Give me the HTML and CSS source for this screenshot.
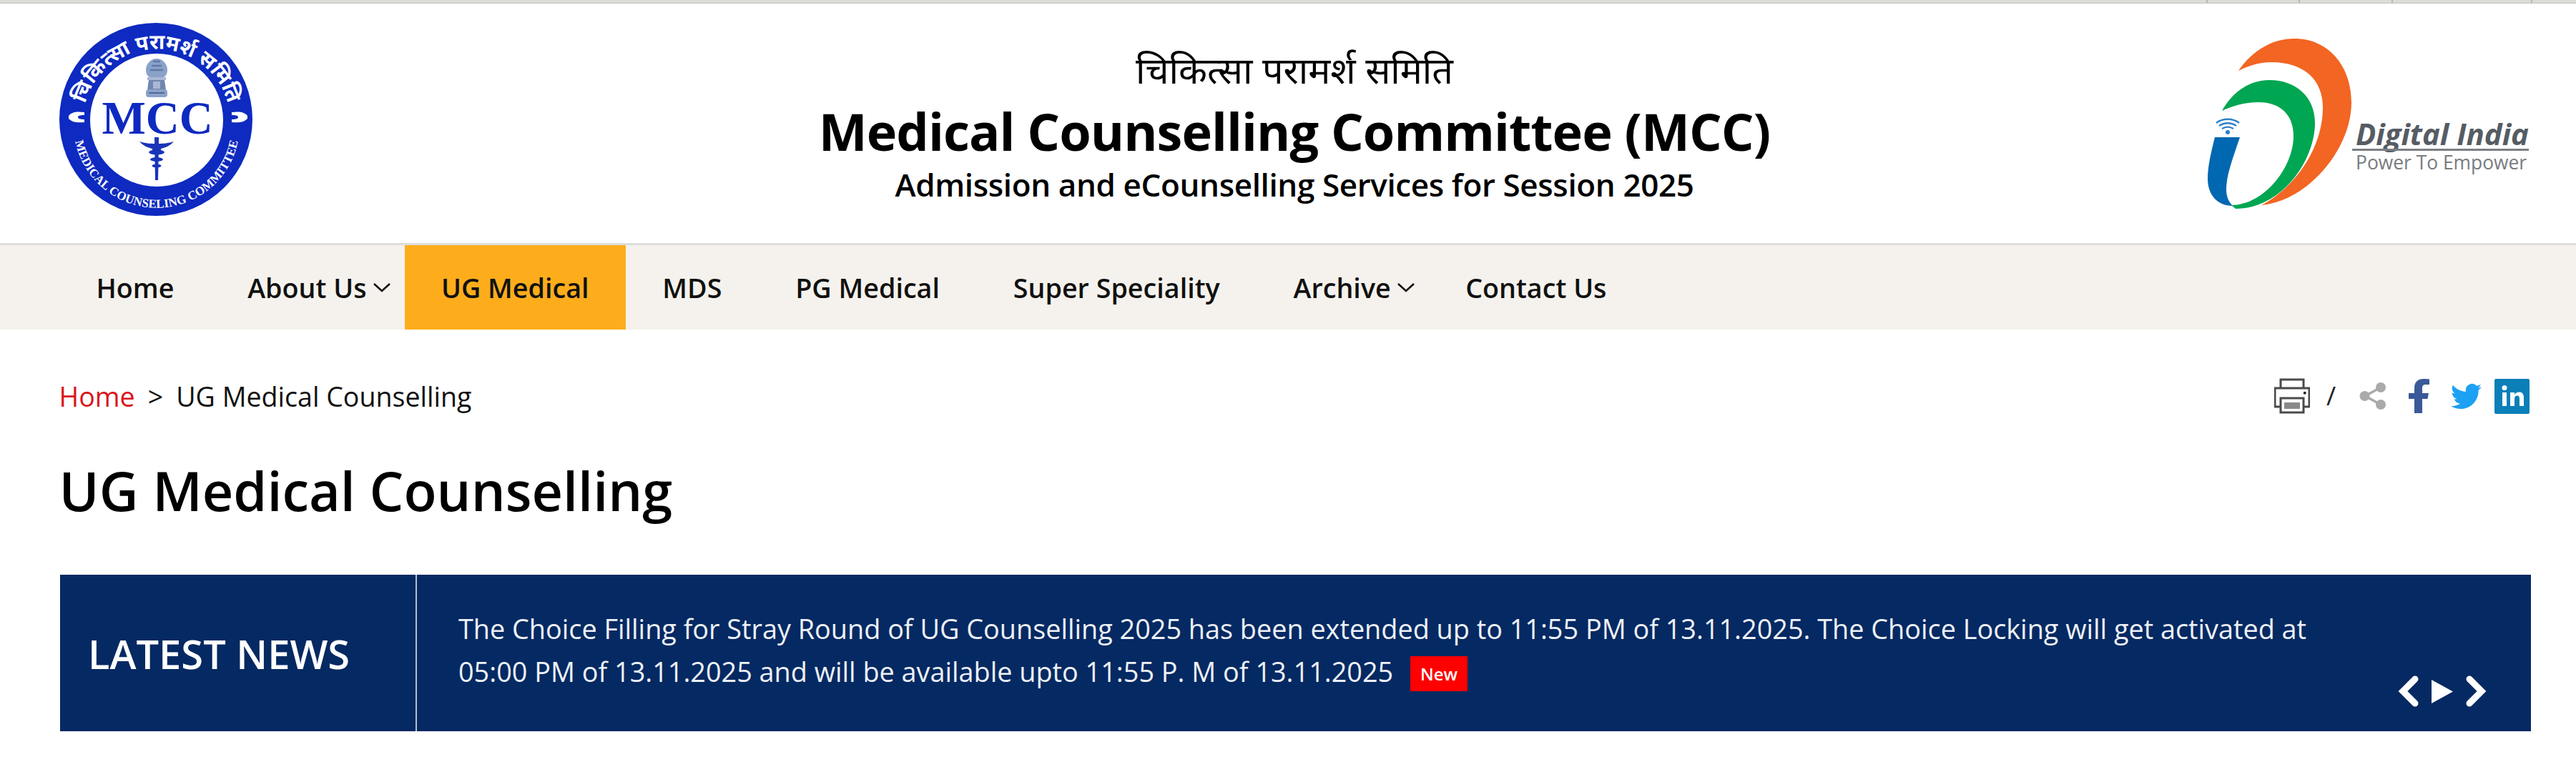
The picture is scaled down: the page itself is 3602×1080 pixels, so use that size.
FILE: index.html
```html
<!DOCTYPE html>
<html lang="en">
<head>
<meta charset="utf-8">
<title>UG Medical Counselling</title>
<link rel="stylesheet" href="styles.css">
</head>
<body>
<div class="topbar"><span class="cell c1"></span><span class="cell c2"></span><span class="cell c3"></span><span class="cell c4"></span><span class="cell c5"></span></div>
<header class="site-header">
  <svg class="logo-mcc" viewBox="80 5 300 335" width="300" height="335" aria-label="MCC logo">
    <defs>
      <path id="arcTop" d="M 120 200 A 103 103 0 1 1 318 200"/>
      <path id="arcBottom" d="M 104 190 A 116 116 0 0 0 334 190"/>
    </defs>
    <circle cx="218" cy="167" r="135" fill="#0e2ac0"/>
    <circle cx="219" cy="168" r="93" fill="#fff"/>
    <text class="seal-hi"><textPath href="#arcTop" startOffset="50%" text-anchor="middle">चिकित्सा परामर्श समिति</textPath></text>
    <text class="seal-en"><textPath href="#arcBottom" startOffset="50%" text-anchor="middle" textLength="318" lengthAdjust="spacing">MEDICAL COUNSELING COMMITTEE</textPath></text>
    <text class="seal-mcc" x="220" y="187" text-anchor="middle">MCC</text>
    <path d="M96 162c5-6 12-6 22-5v4c-7 0-9 1-9 3s3 3 9 3v4c-10 1-17 0-22-5z" fill="#fff"/>
    <path d="M346 162c-5-6-12-6-22-5v4c7 0 9 1 9 3s-3 3-9 3v4c10 1 17 0 22-5z" fill="#fff"/>
    <g class="seal-emblem">
      <path d="M204 98c0-9 7-16 15-16s15 7 15 16c0 5-2 8-5 10H209c-3-2-5-5-5-10z" fill="#8ba2c8"/>
      <path d="M212 92h14M210 98h18M214 86h10" stroke="#5f78a8" stroke-width="2.500"/>
      <rect x="206" y="108" width="26" height="4" fill="#a9b8d4"/>
      <path d="M208 112h22l2 14h-26z" fill="#6f86b0"/>
      <path d="M214 114h10v10h-10z" fill="#a9b8d4"/>
      <rect x="204" y="125" width="30" height="11" rx="4" fill="#8ba2c8"/>
      <path d="M208 130h22" stroke="#4f69a0" stroke-width="2"/>
    </g>
    <g class="seal-caduceus" fill="#1a34b8">
      <path d="M195 198c10 3 17 3 24 3s14 0 24-3c-5 6-13 9-18 10v3h-12v-3c-5-1-13-4-18-10z"/>
      <path d="M216 192h6v10l-1 50-2 0-2-0z"/>
      <ellipse cx="219" cy="213" rx="11" ry="3.500"/>
      <ellipse cx="219" cy="223" rx="9" ry="3"/>
      <ellipse cx="219" cy="232" rx="6.500" ry="2.500"/>
    </g>
  </svg>
  <div class="titles">
    <div class="title-hi">चिकित्सा परामर्श समिति</div>
    <h1 class="title-en">Medical Counselling Committee (MCC)</h1>
    <div class="title-sub">Admission and eCounselling Services for Session 2025</div>
  </div>
  <svg class="logo-di" viewBox="3080 5 460 335" width="460" height="335" aria-label="Digital India logo">
    <path d="M3130 99C3150 70 3178 54 3208 54C3258 54 3288 95 3288 143C3288 210 3225 282 3162 287C3200 268 3248 215 3248 150C3248 112 3222 87 3176 87C3158 87 3144 92 3130 99Z" fill="#f26522"/>
    <path d="M3107 155C3122 128 3146 112 3173 112C3210 112 3237 135 3237 172C3237 225 3190 292 3126 292L3120 287C3165 287 3207 235 3207 190C3207 160 3188 143 3158 143C3138 143 3122 148 3107 155Z" fill="#00a651"/>
    <path d="M3097 192H3132C3122 222 3113 245 3113 265C3113 275 3116 282 3122 288C3100 288 3087 272 3087 250C3087 232 3092 212 3097 192Z" fill="#0067b1"/>
    <g fill="none" stroke="#2f80c8" stroke-width="2.400">
      <path d="M3099 172C3108 165 3122 165 3131 172"/>
      <path d="M3103 176C3110 171 3120 171 3127 176"/>
      <path d="M3107 180C3112 177 3118 177 3123 180"/>
    </g>
    <circle cx="3115" cy="185" r="3" fill="#2f80c8"/>
    <text class="di-name" x="3294" y="203" textLength="242" lengthAdjust="spacingAndGlyphs">Digital India</text>
    <rect x="3289" y="208" width="247" height="3" fill="#7a7f84"/>
    <text class="di-tag" x="3294" y="237">Power To Empower</text>
  </svg>
</header>
<nav class="main-nav">
  <a class="nav-item">Home</a>
  <a class="nav-item has-sub">About Us<svg class="caret" viewBox="0 0 26 16"><path d="M2 3l11 10L24 3" fill="none" stroke="#111" stroke-width="2.600"/></svg></a>
  <a class="nav-item active">UG Medical</a>
  <a class="nav-item">MDS</a>
  <a class="nav-item">PG Medical</a>
  <a class="nav-item">Super Speciality</a>
  <a class="nav-item has-sub">Archive<svg class="caret" viewBox="0 0 26 16"><path d="M2 3l11 10L24 3" fill="none" stroke="#111" stroke-width="2.600"/></svg></a>
  <a class="nav-item">Contact Us</a>
</nav>
<main class="content">
  <div class="crumb-row">
    <div class="crumbs"><a class="crumb-home">Home</a><span class="crumb-sep">&gt;</span><span>UG Medical Counselling</span></div>
    <div class="tools">
      <svg class="ic-print" viewBox="0 0 50 50" width="50" height="50"><g fill="none" stroke="#4a4a4a" stroke-width="3"><path d="M9 14V2h32v12"/><path d="M9 40H1V14h48v26h-8"/><rect x="9" y="28" width="32" height="20" fill="#fff"/></g><rect x="14" y="34" width="22" height="9" fill="#8a8a8a"/><rect x="41" y="19" width="3.500" height="3.500" fill="#222"/></svg>
      <span class="slash">/</span>
      <svg class="ic-share" viewBox="0 0 38 38" width="38" height="38"><path d="M8 19L30 7M8 19l22 12" stroke="#aaa" stroke-width="3.500" fill="none"/><circle cx="7.500" cy="19" r="7" fill="#aaa"/><circle cx="30" cy="7" r="7" fill="#aaa"/><circle cx="30" cy="31" r="7" fill="#aaa"/></svg>
      <svg class="ic-fb" viewBox="0 0 29 48" width="29" height="48"><path d="M8 48V28H0v-8h8v-7C8 4 13 0 21 0c3 0 6 .3 8 .5V8h-5c-4 0-5 2-5 5v7h9l-1.500 8H19v20z" fill="#3b5998"/></svg>
      <svg class="ic-tw" viewBox="0 0 24 24" width="43" height="43"><path d="M23.953 4.57a10 10 0 01-2.825.775 4.958 4.958 0 002.163-2.723c-.951.555-2.005.959-3.127 1.184a4.92 4.92 0 00-8.384 4.482C7.69 8.095 4.067 6.13 1.64 3.162a4.822 4.822 0 00-.666 2.475c0 1.71.87 3.213 2.188 4.096a4.904 4.904 0 01-2.228-.616v.06a4.923 4.923 0 003.946 4.827 4.996 4.996 0 01-2.212.085 4.936 4.936 0 004.604 3.417 9.867 9.867 0 01-6.102 2.105c-.39 0-.779-.023-1.17-.067a13.995 13.995 0 007.557 2.209c9.053 0 13.998-7.496 13.998-13.985 0-.21 0-.42-.015-.63A9.935 9.935 0 0024 4.59z" fill="#1da1f2"/></svg>
      <svg class="ic-li" viewBox="0 0 49 49" width="49" height="49"><rect width="49" height="49" rx="2" fill="#0a7fb8"/><rect x="11" y="19" width="6" height="19" fill="#fff"/><circle cx="14" cy="12.500" r="3.500" fill="#fff"/><path d="M22 19h6v3c1.500-2 3.500-3.500 6.500-3.500 5 0 6.500 3.500 6.500 8V38h-6V28c0-2.500-.7-4.500-3.300-4.500S28 25.500 28 28v10h-6z" fill="#fff"/></svg>
    </div>
  </div>
  <h2 class="page-title">UG Medical Counselling</h2>
  <section class="news">
    <div class="news-label">LATEST NEWS</div>
    <div class="news-body">
      <p class="news-text">The Choice Filling for Stray Round of UG Counselling 2025 has been extended up to 11:55 PM of 13.11.2025. The Choice Locking will get activated at 05:00 PM of 13.11.2025 and will be available upto 11:55 P. M of 13.11.2025 <span class="badge">New</span></p>
      <div class="news-controls">
        <svg class="ctl" viewBox="0 0 30 44" width="30" height="44"><path d="M24 5L7 22l17 17" fill="none" stroke="#fff" stroke-width="9" stroke-linecap="round"/></svg>
        <svg class="ctl" viewBox="0 0 30 33" width="30" height="33"><path d="M0 0l30 16.500L0 33z" fill="#fff"/></svg>
        <svg class="ctl" viewBox="0 0 30 44" width="30" height="44"><path d="M6 5l17 17L6 39" fill="none" stroke="#fff" stroke-width="9" stroke-linecap="round"/></svg>
      </div>
    </div>
  </section>
</main>
</body>
</html>
```
FILE: styles.css
```css
* { box-sizing: border-box; }
html, body { margin: 0; padding: 0; background: #fff; }
body { font-family: "Open Sans", "Noto Sans", "Noto Sans CJK SC", sans-serif; color: #000; overflow: hidden; }

.topbar { display: flex; justify-content: flex-end; height: 5px; background: #dcdcd4; border-bottom: 1px solid #c4c4c0; }
.cell { display: block; height: 100%; border-left: 2px solid #b8b8b4; }
.c1 { width: 129px; }
.c2 { width: 130px; }
.c3 { width: 195px; }
.c4 { width: 63px; }
.c5 { width: 0; border: 0; }

.site-header { display: grid; grid-template-columns: 1fr auto 1fr; height: 335px; padding: 0 62px 0 80px; align-items: start; }
.logo-mcc { display: block; justify-self: start; }
.logo-di { display: block; justify-self: end; }
.seal-hi { font-family: "Noto Sans", "DejaVu Sans", sans-serif; font-size: 29px; font-weight: 700; fill: #fff; }
.seal-en { font-family: "Liberation Serif", serif; font-size: 17px; font-weight: 700; fill: #fff; }
.seal-mcc { font-family: "Liberation Serif", serif; font-size: 65px; font-weight: 700; fill: #0e2ac0; }
.di-name { font-family: "Open Sans", sans-serif; font-size: 41px; font-weight: 700; font-style: italic; fill: #565c63; }
.di-tag { font-family: "Open Sans", sans-serif; font-size: 26.400px; fill: #777c80; }

.titles { display: flex; flex-direction: column; align-items: center; padding-top: 56px; }
.title-hi { font-size: 52px; line-height: 72px; color: #000; }
.title-en { margin: 5px 0 0; font-size: 72px; line-height: 90px; font-weight: 700; letter-spacing: -0.950px; }
.title-sub { margin-top: 0; font-size: 44px; line-height: 60px; font-weight: 600; letter-spacing: -0.380px; }

.main-nav { display: flex; height: 121px; padding-left: 83px; background: #f5f2ed; border-top: 3px solid #ddd; }
.nav-item { display: flex; align-items: center; height: 100%; padding: 0 51.400px; font-size: 37.700px; font-weight: 600; color: #111; }
.has-sub { padding-right: 19px; }
.nav-item.active { background: #fdad1c; }
.caret { width: 26px; height: 16px; margin-left: 8px; }

.content { padding: 0 63px 0 84px; }
.crumb-row { display: flex; justify-content: space-between; align-items: center; height: 66px; margin-top: 60px; }
.crumbs { display: flex; align-items: center; margin-left: -1.500px; font-size: 37.600px; color: #111; }
.crumb-home { color: #d9161c; }
.crumb-sep { margin: 0 18px; }
.tools { display: flex; align-items: center; padding-right: 2px; }
.slash { width: 15px; margin: 0 31px 0 23px; font-size: 36px; line-height: 1; color: #222; }
.ic-fb { margin-left: 31px; }
.ic-tw { margin-left: 30px; }
.ic-li { margin-left: 18px; }

.page-title { margin: 49px 0 0 -1.500px; font-size: 75.600px; line-height: 100px; font-weight: 600; color: #000; }

.news { display: flex; height: 219px; margin-top: 68px; background: #052962; color: #fff; }
.news-label { display: flex; align-items: center; width: 499px; padding-left: 39px; border-right: 2px solid #b5bdcd; font-size: 56px; font-weight: 600; }
.news-body { position: relative; flex: 1; padding: 46px 290px 0 58px; }
.news-text { margin: 0; font-size: 37.800px; line-height: 60px; color: #eef1f6; }
.badge { display: inline-block; margin-left: 14px; padding: 0 14px; height: 49px; line-height: 49px; background: #f00; color: #fff; font-size: 24px; font-weight: 600; vertical-align: 2px; }
.news-controls { position: absolute; right: 62px; bottom: 34px; display: flex; align-items: center; gap: 17px; }
```
